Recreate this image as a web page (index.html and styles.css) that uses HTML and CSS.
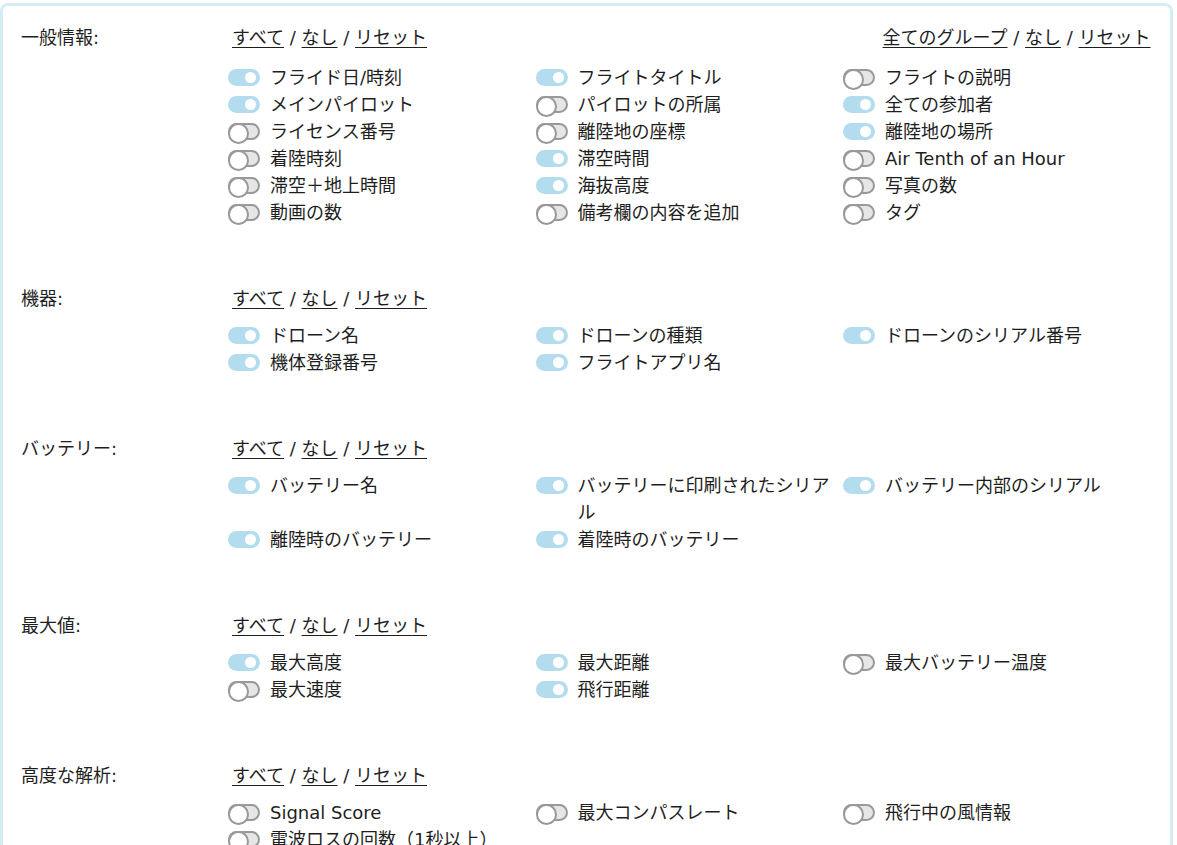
FILE: index.html
```html
<!DOCTYPE html>
<html lang="ja">
<head>
  <meta charset="UTF-8">
  <title>エクスポート項目</title>
  <link rel="stylesheet" href="styles.css">
</head>
<body>

  <div class="panel">

    <div class="seccion">
      <div class="titulo">一般情報:</div>
      <div class="contenido">
        <div class="enlaces enlaces-doble">
          <span><a href="#">すべて</a> / <a href="#">なし</a> / <a href="#">リセット</a></span>
          <span><a href="#">全てのグループ</a> / <a href="#">なし</a> / <a href="#">リセット</a></span>
        </div>
        <div class="items">
          <label class="item"><span class="toggle on"></span>フライド日/時刻</label>
          <label class="item"><span class="toggle on"></span>フライトタイトル</label>
          <label class="item"><span class="toggle"></span>フライトの説明</label>
          <label class="item"><span class="toggle on"></span>メインパイロット</label>
          <label class="item"><span class="toggle"></span>パイロットの所属</label>
          <label class="item"><span class="toggle on"></span>全ての参加者</label>
          <label class="item"><span class="toggle"></span>ライセンス番号</label>
          <label class="item"><span class="toggle"></span>離陸地の座標</label>
          <label class="item"><span class="toggle on"></span>離陸地の場所</label>
          <label class="item"><span class="toggle"></span>着陸時刻</label>
          <label class="item"><span class="toggle on"></span>滞空時間</label>
          <label class="item"><span class="toggle"></span>Air Tenth of an Hour</label>
          <label class="item"><span class="toggle"></span>滞空＋地上時間</label>
          <label class="item"><span class="toggle on"></span>海抜高度</label>
          <label class="item"><span class="toggle"></span>写真の数</label>
          <label class="item"><span class="toggle"></span>動画の数</label>
          <label class="item"><span class="toggle"></span>備考欄の内容を追加</label>
          <label class="item"><span class="toggle"></span>タグ</label>
        </div>
      </div>
    </div>

    <div class="seccion">
      <div class="titulo">機器:</div>
      <div class="contenido">
        <div class="enlaces">
          <span><a href="#">すべて</a> / <a href="#">なし</a> / <a href="#">リセット</a></span>
        </div>
        <div class="items">
          <label class="item"><span class="toggle on"></span>ドローン名</label>
          <label class="item"><span class="toggle on"></span>ドローンの種類</label>
          <label class="item"><span class="toggle on"></span>ドローンのシリアル番号</label>
          <label class="item"><span class="toggle on"></span>機体登録番号</label>
          <label class="item"><span class="toggle on"></span>フライトアプリ名</label>
        </div>
      </div>
    </div>

    <div class="seccion">
      <div class="titulo">バッテリー:</div>
      <div class="contenido">
        <div class="enlaces">
          <span><a href="#">すべて</a> / <a href="#">なし</a> / <a href="#">リセット</a></span>
        </div>
        <div class="items">
          <label class="item"><span class="toggle on"></span>バッテリー名</label>
          <label class="item"><span class="toggle on"></span>バッテリーに印刷されたシリアル</label>
          <label class="item"><span class="toggle on"></span>バッテリー内部のシリアル</label>
          <label class="item"><span class="toggle on"></span>離陸時のバッテリー</label>
          <label class="item"><span class="toggle on"></span>着陸時のバッテリー</label>
        </div>
      </div>
    </div>

    <div class="seccion">
      <div class="titulo">最大値:</div>
      <div class="contenido">
        <div class="enlaces">
          <span><a href="#">すべて</a> / <a href="#">なし</a> / <a href="#">リセット</a></span>
        </div>
        <div class="items">
          <label class="item"><span class="toggle on"></span>最大高度</label>
          <label class="item"><span class="toggle on"></span>最大距離</label>
          <label class="item"><span class="toggle"></span>最大バッテリー温度</label>
          <label class="item"><span class="toggle"></span>最大速度</label>
          <label class="item"><span class="toggle on"></span>飛行距離</label>
        </div>
      </div>
    </div>

    <div class="seccion">
      <div class="titulo">高度な解析:</div>
      <div class="contenido">
        <div class="enlaces">
          <span><a href="#">すべて</a> / <a href="#">なし</a> / <a href="#">リセット</a></span>
        </div>
        <div class="items">
          <label class="item"><span class="toggle"></span>Signal Score</label>
          <label class="item"><span class="toggle"></span>最大コンパスレート</label>
          <label class="item"><span class="toggle"></span>飛行中の風情報</label>
          <label class="item"><span class="toggle"></span>電波ロスの回数（1秒以上）</label>
        </div>
      </div>
    </div>

  </div>

</body>
</html>
```

FILE: styles.css
```css
* {
  box-sizing: border-box;
}

body {
  margin: 0;
  padding: 3px 4px 0 0;
  background: #ffffff;
  font-family: 'DejaVu Sans', 'Noto Sans CJK JP', sans-serif;
  font-size: 18px;
  line-height: 27px;
  color: #1e1e1e;
}

.panel {
  background: #ffffff;
  border: 3px solid #d6ecf4;
  border-radius: 8px;
  padding: 18px 23px 40px 18px;
  min-height: 900px;
}

.seccion {
  display: grid;
  grid-template-columns: 207px 1fr;
  margin-bottom: 59px;
}

.titulo {
  white-space: nowrap;
}

.enlaces {
  display: flex;
  justify-content: space-between;
  padding-left: 4px;
  margin-bottom: 10px;
}

.enlaces-doble {
  margin-bottom: 13px;
}

.enlaces a {
  color: #1e1e1e;
  text-decoration: underline;
  text-underline-offset: 3px;
}

.items {
  display: grid;
  grid-template-columns: repeat(3, 307.5px);
}

.item {
  display: flex;
  align-items: flex-start;
  gap: 10px;
  padding-right: 4px;
}

.toggle {
  flex: none;
  position: relative;
  width: 32px;
  height: 17px;
  margin-top: 5px;
  border-radius: 9px;
  background: #b4dcef;
}

.toggle::after {
  content: "";
  position: absolute;
  top: 3px;
  right: 4px;
  width: 11px;
  height: 11px;
  border-radius: 50%;
  background: #ffffff;
}

.toggle:not(.on) {
  background: #e6e6e6;
  border: 2px solid #999999;
}

.toggle:not(.on)::after {
  top: -2px;
  left: -2px;
  right: auto;
  width: 17px;
  height: 17px;
  border: 2px solid #999999;
}
```
